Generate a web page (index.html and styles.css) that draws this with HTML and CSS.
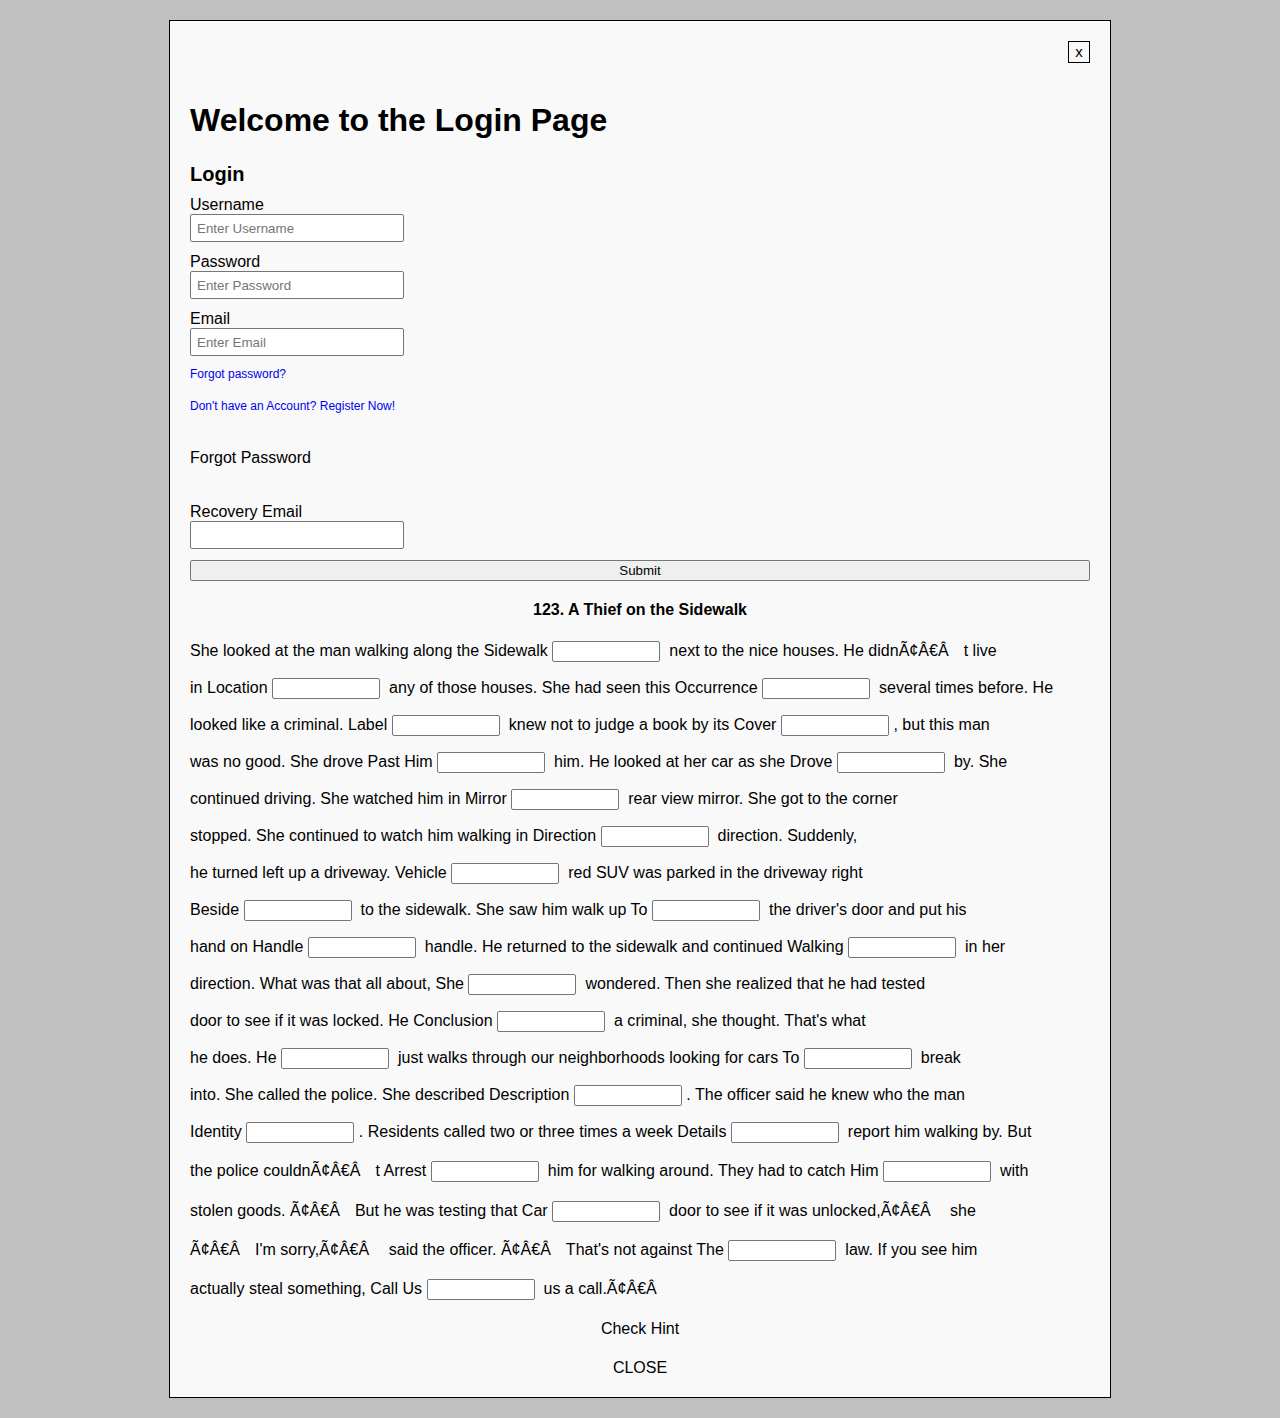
FILE: index.html
```html
<!DOCTYPE html>
<html lang="en">
<head>
<meta charset="utf-8">
<title>Welcome to the Login Page</title>
<link rel="stylesheet" href="styles.css">
</head>
<body>
<div class="modal">
  <div class="close-row"><button class="close-x" type="button">x</button></div>
  <h1 class="title">Welcome to the Login Page</h1>
  <h2 class="subtitle">Login</h2>
  <form class="login-form">
    <div class="field first">
      <label class="field-label" for="u">Username</label>
      <input class="text-input" id="u" type="text" placeholder="Enter Username">
    </div>
    <div class="field">
      <label class="field-label" for="p">Password</label>
      <input class="text-input" id="p" type="password" placeholder="Enter Password">
    </div>
    <div class="field">
      <label class="field-label" for="e">Email</label>
      <input class="text-input" id="e" type="text" placeholder="Enter Email">
    </div>
    <div class="link-row first-link"><a href="#" class="small-link">Forgot password?</a></div>
    <div class="link-row second-link"><a href="#" class="small-link">Don't have an Account? Register Now!</a></div>
  </form>
  <div class="forgot-title">Forgot Password</div>
  <div class="recovery">
    <label class="field-label" for="r">Recovery Email</label>
    <input class="text-input" id="r" type="text">
  </div>
  <button class="submit-btn" type="button">Submit</button>

  <div class="story-title">123. A Thief on the Sidewalk</div>
  <div class="story">
    <div class="line pad-37">She looked at the man walking along the Sidewalk <input class="blank" type="text"> &nbsp;next to the nice houses. He didnÃ¢Â€Â<span class="cc"></span>t live</div>
    <div class="line">in Location <input class="blank" type="text"> &nbsp;any of those houses. She had seen this Occurrence <input class="blank" type="text"> &nbsp;several times before. He</div>
    <div class="line">looked like a criminal. Label <input class="blank" type="text"> &nbsp;knew not to judge a book by its Cover <input class="blank" type="text"> , but this man</div>
    <div class="line">was no good. She drove Past Him <input class="blank" type="text"> &nbsp;him. He looked at her car as she Drove <input class="blank" type="text"> &nbsp;by. She</div>
    <div class="line">continued driving. She watched him in Mirror <input class="blank" type="text"> &nbsp;rear view mirror. She got to the corner</div>
    <div class="line">stopped. She continued to watch him walking in Direction <input class="blank" type="text"> &nbsp;direction. Suddenly,</div>
    <div class="line">he turned left up a driveway. Vehicle <input class="blank" type="text"> &nbsp;red SUV was parked in the driveway right</div>
    <div class="line">Beside <input class="blank" type="text"> &nbsp;to the sidewalk. She saw him walk up To <input class="blank" type="text"> &nbsp;the driver's door and put his</div>
    <div class="line">hand on Handle <input class="blank" type="text"> &nbsp;handle. He returned to the sidewalk and continued Walking <input class="blank" type="text"> &nbsp;in her</div>
    <div class="line">direction. What was that all about, She <input class="blank" type="text"> &nbsp;wondered. Then she realized that he had tested</div>
    <div class="line">door to see if it was locked. He Conclusion <input class="blank" type="text"> &nbsp;a criminal, she thought. That's what</div>
    <div class="line">he does. He <input class="blank" type="text"> &nbsp;just walks through our neighborhoods looking for cars To <input class="blank" type="text"> &nbsp;break</div>
    <div class="line">into. She called the police. She described Description <input class="blank" type="text"> . The officer said he knew who the man</div>
    <div class="line">Identity <input class="blank" type="text"> . Residents called two or three times a week Details <input class="blank" type="text"> &nbsp;report him walking by. But</div>
    <div class="line pad-25">the police couldnÃ¢Â€Â<span class="cc"></span>t Arrest <input class="blank" type="text"> &nbsp;him for walking around. They had to catch Him <input class="blank" type="text"> &nbsp;with</div>
    <div class="line pad-3">stolen goods. Ã¢Â€Â<span class="cc"></span>But he was testing that Car <input class="blank" type="text"> &nbsp;door to see if it was unlocked,Ã¢Â€Â<span class="cc"></span> she</div>
    <div class="line pad-2">Ã¢Â€Â<span class="cc"></span>I'm sorry,Ã¢Â€Â<span class="cc"></span> said the officer. Ã¢Â€Â<span class="cc"></span>That's not against The <input class="blank" type="text"> &nbsp;law. If you see him</div>
    <div class="line pad-2">actually steal something, Call Us <input class="blank" type="text"> &nbsp;us a call.Ã¢Â€Â<span class="cc"></span></div>
  </div>
  <div class="hint">Check Hint</div>
  <div class="close-text">CLOSE</div>
</div>
</body>
</html>
```

FILE: styles.css
```css
html, body {
  margin: 0;
  padding: 0;
}
body {
  background: #c0c0c0;
  font-family: "Liberation Sans", Arial, Helvetica, sans-serif;
  font-size: 16px;
  color: #000;
  padding: 20px 0;
}
.modal {
  width: 900px;
  margin: 0 auto;
  padding: 20px 20px 19.4px;
  background: #f9f9f9;
  border: 1px solid #000;
}
.close-row {
  display: flex;
  justify-content: flex-end;
  height: 22px;
}
.close-x {
  width: 22px;
  height: 22px;
  padding: 0;
  margin: 0;
  border: 1px solid #000;
  background: #f9f9f9;
  font-family: "Liberation Sans", Arial, sans-serif;
  font-size: 15px;
  line-height: 18px;
  color: #000;
  text-align: center;
}
.title {
  font-size: 32px;
  font-weight: bold;
  line-height: 36.8px;
  margin: 39.2px 0 0;
}
.subtitle {
  font-size: 20px;
  font-weight: bold;
  line-height: 23px;
  margin: 24.3px 0 0;
}
.login-form {
  margin: 0;
}
.field {
  margin-top: 10.6px;
}
.field.first {
  margin-top: 9.3px;
}
.field-label {
  display: block;
  line-height: 18.4px;
  height: 18.4px;
}
.text-input {
  display: block;
  box-sizing: border-box;
  width: 214px;
  height: 28px;
  margin: 0;
  padding: 1px 6px 0;
  border: 1px solid #767676;
  border-radius: 2px;
  background: #fff;
  font-family: "Liberation Sans", Arial, sans-serif;
  font-size: 13.333px;
  color: #000;
}
.text-input::placeholder {
  color: #757575;
}
.link-row {
  font-size: 12px;
  line-height: 13.8px;
  height: 13.8px;
}
.first-link {
  margin-top: 11.6px;
}
.second-link {
  margin-top: 18.6px;
}
.small-link {
  color: #0000ee;
  text-decoration: none;
}
.forgot-title {
  margin-top: 34.8px;
  line-height: 18.4px;
}
.recovery {
  margin-top: 35.6px;
}
.submit-btn {
  display: block;
  box-sizing: border-box;
  width: 100%;
  height: 21px;
  margin: 11px 0 0;
  padding: 0;
  border: 1px solid #767676;
  border-radius: 2px;
  background: #efefef;
  font-family: "Liberation Sans", Arial, sans-serif;
  font-size: 13.333px;
  color: #000;
}
.story-title {
  margin-top: 10.2px;
  text-align: center;
  font-weight: bold;
  line-height: 37px;
  height: 37px;
}
.story {
  display: flex;
  flex-direction: column;
}
.line {
  white-space: nowrap;
  line-height: 37px;
  height: 37px;
  letter-spacing: 0.025px;
}
.pad-37 { padding-top: 3.7px; }
.pad-25 { padding-top: 2.5px; }
.pad-3 { padding-top: 3px; }
.pad-2 { padding-top: 2px; }
.cc {
  display: inline-block;
  width: 15px;
}
.blank {
  box-sizing: border-box;
  width: 108px;
  height: 21px;
  margin: 0;
  padding: 1px 2px;
  border: 1px solid #767676;
  border-radius: 2px;
  background: #fff;
  font-family: "Liberation Sans", Arial, sans-serif;
  font-size: 13.333px;
  letter-spacing: normal;
  vertical-align: baseline;
}
.hint {
  margin-top: 13.1px;
  text-align: center;
  line-height: 18.4px;
}
.close-text {
  margin-top: 20.1px;
  text-align: center;
  line-height: 18.4px;
}
```
